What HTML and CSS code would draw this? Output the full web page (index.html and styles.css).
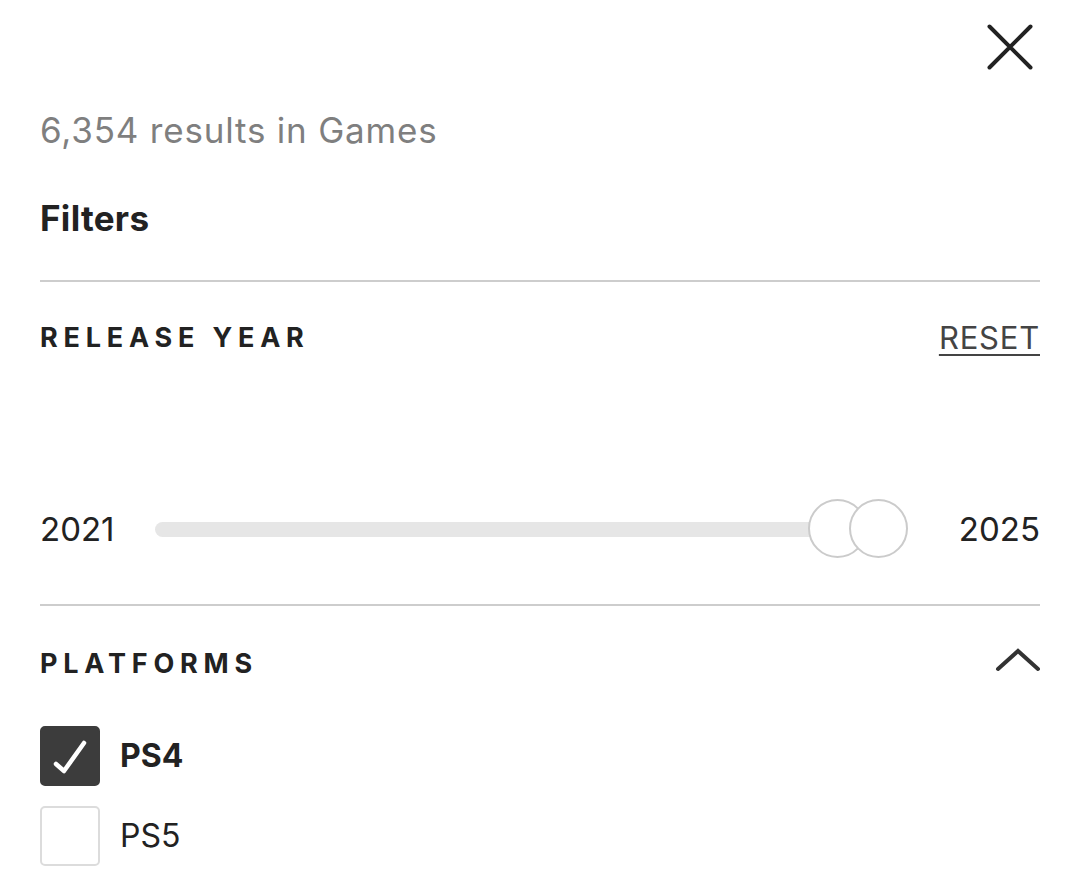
FILE: index.html
```html
<!DOCTYPE html>
<html lang="en">
<head>
<meta charset="utf-8">
<title>Filters</title>
<link rel="stylesheet" href="styles.css">
</head>
<body>
<div class="panel">
  <div class="top">
    <button class="close" aria-label="Close">
      <svg width="46" height="46" viewBox="0 0 46 46"><path d="M2.5 2.5 L43.5 43.5 M43.5 2.5 L2.5 43.5" stroke="#222" stroke-width="4" stroke-linecap="round" fill="none"/></svg>
    </button>
  </div>
  <div class="count">6,354 results in Games</div>
  <h2 class="title">Filters</h2>

  <section class="section year">
    <div class="sec-head">
      <span class="sec-title">RELEASE YEAR</span>
      <a class="reset" href="#">RESET</a>
    </div>
    <div class="slider-row">
      <span class="yr">2021</span>
      <div class="slider">
        <div class="track"></div>
        <span class="thumb thumb-a"></span>
        <span class="thumb thumb-b"></span>
      </div>
      <span class="yr">2025</span>
    </div>
  </section>

  <section class="section platforms">
    <div class="sec-head">
      <span class="sec-title">PLATFORMS</span>
      <svg class="chev" width="46" height="26" viewBox="0 0 46 26"><path d="M3 22 L23 4 L43 22" stroke="#333" stroke-width="4" stroke-linecap="round" stroke-linejoin="miter" fill="none"/></svg>
    </div>
    <ul class="options">
      <li class="opt checked">
        <span class="box"><svg width="60" height="60" viewBox="0 0 60 60"><path d="M16 38 L24 45 L44 17" stroke="#fff" stroke-width="4.5" stroke-linecap="round" stroke-linejoin="round" fill="none"/></svg></span>
        <span class="opt-label">PS4</span>
      </li>
      <li class="opt">
        <span class="box"></span>
        <span class="opt-label">PS5</span>
      </li>
    </ul>
  </section>
</div>
</body>
</html>
```

FILE: styles.css
```css
* { box-sizing: border-box; }
html, body { margin: 0; padding: 0; background: #fff; }
body {
  font-family: "Inter", "Liberation Sans", sans-serif;
  color: #222;
  overflow: hidden;
}
.panel { padding: 0 40px; width: 1080px; }

.top {
  height: 70px;
  display: flex;
  justify-content: flex-end;
  align-items: flex-end;
  padding-right: 7px;
}
.close {
  border: 0;
  background: none;
  padding: 0;
  width: 46px;
  height: 46px;
  display: block;
}
.close svg { display: block; }

.count {
  margin-top: 40px;
  height: 40px;
  line-height: 40px;
  font-size: 35px;
  letter-spacing: 0.8px;
  color: #7f7f7f;
}
.title {
  margin: 48px 0 0;
  height: 40px;
  line-height: 40px;
  font-size: 35px;
  letter-spacing: 0.3px;
  font-weight: 700;
  color: #222;
}

.section { border-top: 2px solid #cdcdcd; }
.year { margin-top: 42px; padding: 36px 0 45px; }
.platforms { padding-top: 38px; }

.sec-head {
  height: 40px;
  display: flex;
  justify-content: space-between;
  align-items: center;
}
.sec-title {
  font-size: 27px;
  font-weight: 700;
  letter-spacing: 5.8px;
  line-height: 40px;
  color: #222;
}
.reset {
  font-size: 31px;
  letter-spacing: 0.8px;
  color: #444;
  text-decoration: underline;
  text-decoration-thickness: 2px;
  text-underline-offset: 5px;
  line-height: 40px;
}

.slider-row {
  margin-top: 141px;
  height: 60px;
  display: grid;
  grid-template-columns: auto 1fr auto;
  column-gap: 40px;
  align-items: center;
}
.yr { font-size: 33px; line-height: 40px; color: #222; }
.slider {
  position: relative;
  height: 60px;
  margin-right: 11px;
  display: flex;
  align-items: center;
}
.track {
  width: calc(100% - 50px);
  height: 15px;
  border-radius: 8px;
  background: #e6e6e6;
}
.thumb {
  position: absolute;
  top: 0;
  width: 59px;
  height: 59px;
  border-radius: 50%;
  border: 2px solid #cbcbcb;
  background: #fff;
}
.thumb-a { right: 41px; }
.thumb-b { right: 0; }

.chev { display: block; margin-right: -1px; margin-top: -8px; }

.options { list-style: none; margin: 42px 0 0; padding: 0; display: flex; flex-direction: column; gap: 20px; }
.opt { display: flex; align-items: center; gap: 20px; height: 60px; }
.box {
  width: 60px;
  height: 60px;
  border-radius: 5px;
  border: 2px solid #dcdcdc;
  background: #fff;
  flex: none;
}
.box svg { display: block; margin: -2px; }
.checked .box { background: #3c3c3c; border-color: #3c3c3c; }
.opt-label { font-size: 32px; line-height: 40px; color: #222; }
.checked .opt-label { font-weight: 700; }
```
